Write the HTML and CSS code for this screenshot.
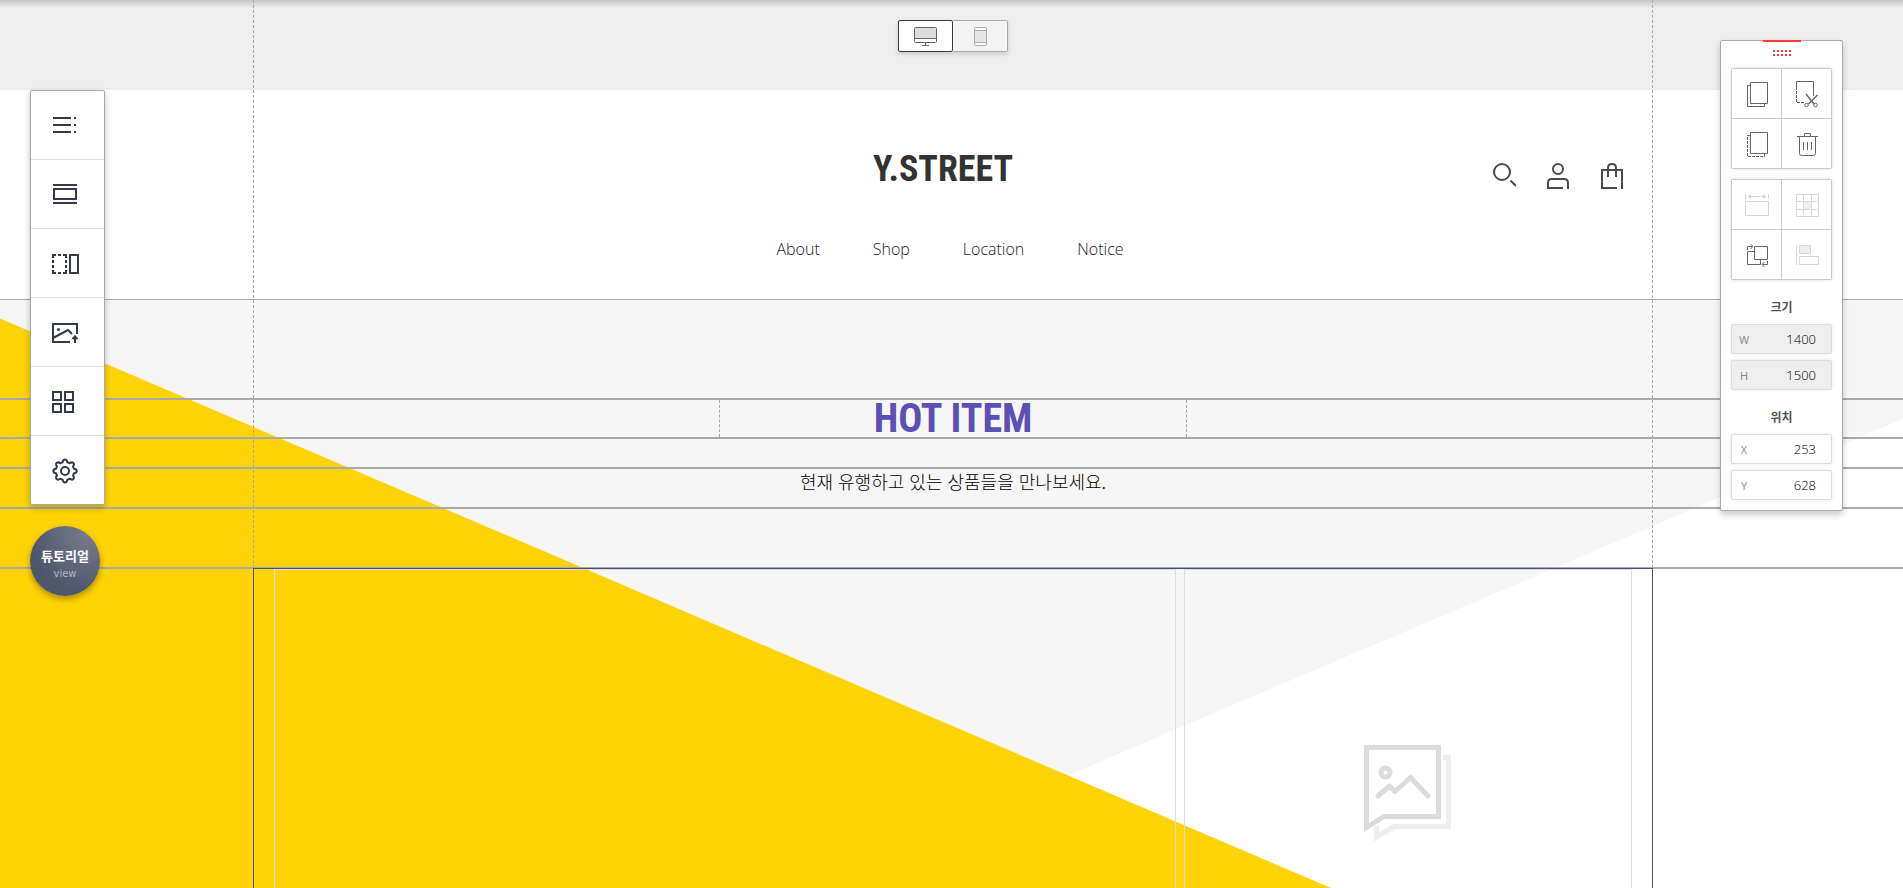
FILE: index.html
```html
<!DOCTYPE html>
<html lang="ko">
<head>
<meta charset="utf-8">
<meta name="viewport" content="width=device-width, initial-scale=1">
<title>Y.STREET</title>
<link rel="stylesheet" href="styles.css">
</head>
<body>
<div class="editor">
  <div class="topbar">
    <div class="device-switch">
      <button type="button" class="device device-active" aria-label="Desktop">
        <svg width="24" height="20" viewBox="0 0 24 20" fill="none" stroke="#666"><rect x=".5" y="1.500" width="22" height="15" rx="1" fill="#fff"/><path d="M1 2h21v10H1z" fill="#ddd" stroke="none"/><path d="M.5 12.500h22M11.500 17v2M8 19.500h7"/></svg>
      </button>
      <button type="button" class="device" aria-label="Mobile">
        <svg width="14" height="20" viewBox="0 0 14 20" fill="none" stroke="#aaa"><rect x="1.500" y="1.500" width="12" height="18" rx="1.500" fill="#fff"/><path d="M2 5h11v11H2z" fill="#e6e6e6" stroke="none"/><path d="M1.500 4.500h12M1.500 16.500h12"/></svg>
      </button>
    </div>
  </div>

  <div class="canvas">
    <header class="site-header">
      <div class="frame header-frame">
        <a class="logo" href="#">Y.STREET</a>
        <nav class="nav" aria-label="Main">
          <a href="#">About</a><a href="#">Shop</a><a href="#">Location</a><a href="#">Notice</a>
        </nav>
        <div class="tools">
          <a href="#" aria-label="Search"><svg width="26" height="28" viewBox="0 0 26 28" fill="none" stroke="#4a4a4a" stroke-width="2"><circle cx="12" cy="10" r="8"/><path d="M20.500 18.500l5.500 5.500"/></svg></a>
          <a href="#" aria-label="Account"><svg width="24" height="28" viewBox="0 0 24 28" fill="none" stroke="#4a4a4a" stroke-width="2"><circle cx="12" cy="7" r="5"/><path d="M17 26H2v-5q0-4 4-4h12q4 0 4 4v6"/></svg></a>
          <a href="#" aria-label="Cart"><svg width="24" height="28" viewBox="0 0 24 28" fill="none" stroke="#4a4a4a" stroke-width="2"><path d="M17 26H2V8h20v19M8 15V6q0-4 4-4t4 4v9"/></svg></a>
        </div>
      </div>
    </header>

    <main class="section">
      <svg class="backdrop" viewBox="0 0 1903 588" preserveAspectRatio="none" aria-hidden="true">
        <path d="M1903 119L1068 475.400 1331 588H1903z" fill="#fff"/>
        <path d="M0 18.500L1331 588H0z" fill="#ffd306"/>
      </svg>
      <div class="section-body">
        <div class="row row-spacer"></div>
        <div class="row row-lined"><div class="frame"><h1 class="headline">HOT ITEM</h1></div></div>
        <div class="row row-gap"></div>
        <div class="row row-lined"><div class="frame"><p class="lead">현재 유행하고 있는 상품들을 만나보세요.</p></div></div>
        <div class="row row-rest"></div>
        <div class="row row-gallery">
          <div class="frame gallery">
            <div class="slot slot-wide"></div>
            <div class="slot slot-narrow">
              <svg width="88" height="98" viewBox="0 0 88 98" fill="none" stroke-width="5"><path d="M79 12.500h5.500v69H30L12.500 92V81" stroke="#eee"/><path d="M2.500 2.500h72v69H20L2.500 82.500z" stroke="#dcdcdc"/><g stroke="#dcdcdc"><circle cx="21.500" cy="27.500" r="4.500"/><path d="M14 51l11.500-10 5.500 5.500 15.500-14L64 51" stroke-linecap="round" stroke-linejoin="round"/></g></svg>
            </div>
          </div>
        </div>
      </div>
    </main>
  </div>

  <div class="side">
    <div class="toolbox">
      <button type="button" aria-label="Menu"><svg width="28" height="24" viewBox="0 0 28 24" fill="none" stroke="#353a4a" stroke-width="2"><path d="M2 4h18M2 11h18M2 18h18M23 4h2M23 11h2M23 18h2"/></svg></button>
      <button type="button" aria-label="Section"><svg width="28" height="24" viewBox="0 0 28 24" fill="none" stroke="#353a4a" stroke-width="2"><path d="M2 2h24M2 20h24M3 6h22v10H3z"/></svg></button>
      <button type="button" aria-label="Columns"><svg width="28" height="24" viewBox="0 0 28 24" fill="none" stroke="#353a4a" stroke-width="2"><path d="M1 3h4M7 3h3M12 3h4M1 21h4M7 21h3M12 21h4M2 2v4M2 8v3M2 13v3M2 18v4M15 2v4M15 8v3M15 13v3M15 18v4M19 3h8v18h-8z"/></svg></button>
      <button type="button" aria-label="Image"><svg width="28" height="24" viewBox="0 0 28 24" fill="none" stroke="#353a4a" stroke-width="2"><path d="M19 21H2V3h24v10M2 17l15-8 4 4M24 22v-6M21.500 18L24 15.500l2.500 2.500"/><circle cx="7.500" cy="8.500" r="1.500" fill="#353a4a" stroke="none"/></svg></button>
      <button type="button" aria-label="Widgets"><svg width="28" height="24" viewBox="0 0 28 24" fill="none" stroke="#353a4a" stroke-width="2"><path d="M2 2h8v8H2zM14 2h8v8h-8zM2 14h8v8H2zM14 14h8v8h-8z"/></svg></button>
      <button type="button" aria-label="Settings"><svg width="28" height="26" viewBox="0 0 28 26" fill="none" stroke="#353a4a" stroke-width="2" stroke-linejoin="round"><path d="M14 1.500q2 0 2.300 2.800 1 .3 2 1Q21 3.600 22.400 5q1.300 1.400-.4 3.600.6 1 .9 2.100 2.800.3 2.800 2.300t-2.800 2.300q-.3 1.100-.9 2.100 1.700 2.200.4 3.600-1.400 1.400-4.100-.3-1 .7-2 1-.3 2.800-2.300 2.800t-2.300-2.800q-1-.3-2-1Q7 22.400 5.600 21q-1.300-1.400.4-3.600-.6-1-.9-2.100Q2.300 15 2.300 13t2.800-2.300q.3-1.100.9-2.100Q4.300 6.400 5.600 5 7 3.600 9.700 5.300q1-.7 2-1Q12 1.500 14 1.500z"/><circle cx="14" cy="13" r="4"/></svg></button>
    </div>
    <button type="button" class="tutorial"><strong>튜토리얼</strong><span>view</span></button>
  </div>

  <aside class="inspector">
    <svg class="grip" width="38" height="16" viewBox="0 0 38 16" fill="none" stroke="#fb3b30" stroke-width="2" aria-hidden="true"><path d="M0 1h38"/><path d="M10 11h18M10 15h18" stroke-dasharray="2 2"/></svg>
    <div class="actions">
      <button type="button" aria-label="Copy"><svg width="25" height="29" viewBox="0 0 25 29" fill="none" stroke="#666"><path d="M6.500 3.500h17v21h-17zM6 6.500H3.500v21h17V25"/></svg></button>
      <button type="button" aria-label="Cut"><svg width="25" height="29" viewBox="0 0 25 29" fill="none" stroke="#666"><path d="M2.500 8V2.500h17V17"/><path d="M2.500 8v15.500H11" stroke-dasharray="3 1"/><path d="M12 15l8 10M23.500 16l-9 9" stroke-width="1.500"/><circle cx="12.500" cy="26" r="1.800"/><circle cx="21.500" cy="26" r="1.800"/></svg></button>
      <button type="button" aria-label="Duplicate"><svg width="25" height="29" viewBox="0 0 25 29" fill="none" stroke="#666"><path d="M6.500 3.500h17v21h-17z"/><path d="M6 6.500H3.500v21h17V25" stroke-dasharray="3 1"/></svg></button>
      <button type="button" aria-label="Delete"><svg width="25" height="29" viewBox="0 0 25 29" fill="none" stroke="#666"><path d="M3 7.500h21M10.500 7V4.500h6V7M5.500 8v16.500q0 2 2 2h12q2 0 2-2V8M9.500 13v8M13.500 13v8M17.500 13v8"/></svg></button>
    </div>
    <div class="actions">
      <button type="button" aria-label="Full width"><svg width="25" height="29" viewBox="0 0 25 29" fill="none" stroke="#d6d6d6"><path d="M1.500 11.500h23v14h-23zM1.500 4v5M24.500 4v5M4 6.500h18"/><path d="M3.500 6.500L7 4v5zM22.500 6.500L19 4v5z" fill="#d6d6d6" stroke="none"/></svg></button>
      <button type="button" aria-label="Grid"><svg width="25" height="29" viewBox="0 0 25 29" fill="none" stroke="#d6d6d6"><path d="M9 11h9v8H9z" fill="#eee" stroke="none"/><path d="M2.500 4.500h22v22h-22z"/><path d="M9.500 5v21M17.500 5v21M3 11.500h21M3 19.500h21" stroke-dasharray="6 1"/></svg></button>
      <button type="button" aria-label="Order"><svg width="25" height="29" viewBox="0 0 25 29" fill="none" stroke="#666"><path d="M10.500 6.500h13v13h-13zM10 11.500H3.500v13h13V20M3.500 10V6.500h5M6.500 4L9 6.500 6.500 9M23.500 21v3.500h-5M20.500 22L18 24.500l2.500 2.500"/></svg></button>
      <button type="button" aria-label="Align"><svg width="25" height="29" viewBox="0 0 25 29" fill="none" stroke="#d6d6d6"><path d="M2.500 5v20M5.500 16.500h19v8h-19z"/><path d="M5.500 5.500h11v8h-11z" fill="#eee"/></svg></button>
    </div>
    <fieldset class="fields">
      <legend>크기</legend>
      <label class="field field-off"><span>W</span><input type="text" value="1400" readonly></label>
      <label class="field field-off"><span>H</span><input type="text" value="1500" readonly></label>
    </fieldset>
    <fieldset class="fields">
      <legend>위치</legend>
      <label class="field"><span>X</span><input type="text" value="253"></label>
      <label class="field"><span>Y</span><input type="text" value="628"></label>
    </fieldset>
  </aside>
</div>
</body>
</html>
```

FILE: styles.css
```css
*, *::before { box-sizing: border-box; }

body {
  margin: 0;
  background: #fff;
  color: #333;
  font-family: "Open Sans", "Noto Sans CJK KR", sans-serif;
}

a { color: inherit; text-decoration: none; }

button {
  margin: 0;
  padding: 0;
  border: 0;
  background: none;
  font: inherit;
  color: inherit;
  cursor: pointer;
}

svg { display: block; }

.editor {
  position: relative;
  display: flex;
  flex-direction: column;
  min-height: 100vh;
  overflow: hidden;
}

/* Top strip with the device switch */
.topbar {
  display: flex;
  justify-content: center;
  height: 90px;
  padding: 20px 0 0 3px;
  background: #eee linear-gradient(#c4c4c4, #eee) no-repeat 0 0 / 100% 8px;
}

.device-switch {
  display: flex;
  height: 32px;
  box-shadow: 0 2px 4px rgba(0, 0, 0, 0.15);
}

.device {
  display: flex;
  align-items: center;
  justify-content: center;
  width: 55px;
  border: 1px solid #aaa;
  border-left: 0;
  border-radius: 0 2px 2px 0;
  background: #f3f3f3;
}

.device-active {
  border: 1px solid #353a4a;
  border-radius: 2px;
  background: #fff;
}

/* Page canvas */
.canvas {
  flex: 1;
  display: flex;
  flex-direction: column;
}

.frame {
  width: 1400px;
  max-width: 100%;
  margin: 0 auto;
}

.site-header {
  height: 210px;
  padding-left: 3px;
  border-bottom: 1px solid #a9a9a9;
}

.header-frame {
  position: relative;
  display: flex;
  flex-direction: column;
  align-items: center;
  height: 100%;
  padding-top: 55px;
}

.logo {
  padding-right: 20px;
  font: bold 36px/48px "Liberation Sans Narrow", "Roboto Condensed", "Open Sans", sans-serif;
}

.nav {
  display: flex;
  gap: 53px;
  margin-top: 44px;
  padding-right: 6px;
  color: #222;
  font-size: 16px;
  font-weight: 300;
  line-height: 24px;
}

.tools {
  position: absolute;
  top: 72px;
  right: 29px;
  display: flex;
  gap: 30px;
}

.section {
  position: relative;
  flex: 1;
  display: flex;
  background: #f6f6f6;
}

.backdrop {
  position: absolute;
  inset: 0;
  width: 100%;
  height: 100%;
}

.section-body {
  position: relative;
  flex: 1;
  display: flex;
  flex-direction: column;
}

.row { padding-left: 3px; }
.row-spacer { height: 98px; }
.row-gap { height: 28px; }
.row-rest { height: 58px; }

.row-lined {
  border-top: 2px solid #a9a9a9;
  border-bottom: 2px solid #a9a9a9;
}

.headline {
  width: 468px;
  margin: 0 auto;
  border: 1px dashed #a9a9a9;
  border-width: 0 1px;
  color: #5c50b4;
  font: bold 40px/37px "Liberation Sans Narrow", "Roboto Condensed", "Open Sans", sans-serif;
  text-align: center;
}

.lead {
  margin: 0;
  padding-bottom: 14px;
  color: #000;
  font: 300 18px/24px "Noto Sans CJK KR", sans-serif;
  text-align: center;
}

.row-gallery {
  flex: 1;
  display: flex;
  border-top: 1px solid #a9a9a9;
  box-shadow: inset 0 1px #a9a9a9;
}

.gallery {
  display: flex;
  gap: 8px;
  padding: 0 20px;
  border: 1px solid #445082;
  border-bottom: 0;
}

.slot {
  border: 1px solid #ddd;
  border-bottom: 0;
}

.slot-wide { flex: 904; }

.slot-narrow {
  flex: 448;
  display: flex;
  justify-content: center;
  padding-top: 175px;
}

/* Dotted page guides */
.editor::before {
  content: "";
  position: absolute;
  z-index: 1;
  top: 0;
  left: calc(50% + 1px);
  width: 1400px;
  height: 568px;
  margin-left: -700px;
  border: 1px dashed #a9a9a9;
  border-width: 0 1px;
  pointer-events: none;
}

/* Left floating tools */
.side {
  position: absolute;
  z-index: 2;
  top: 90px;
  left: 30px;
  display: flex;
  flex-direction: column;
  gap: 21px;
}

.toolbox {
  display: flex;
  flex-direction: column;
  width: 75px;
  border: 1px solid #a9a9a9;
  border-radius: 2px;
  background: #fff;
  box-shadow: 0 3px 6px rgba(0, 0, 0, 0.25);
}

.toolbox button {
  display: flex;
  align-items: center;
  justify-content: center;
  height: 69px;
  padding: 2px 5px 0 0;
  border-bottom: 1px solid #ddd;
}

.toolbox button:last-child {
  height: 68px;
  border-bottom: 0;
}

.tutorial {
  display: flex;
  flex-direction: column;
  align-items: center;
  width: 70px;
  height: 70px;
  padding-top: 21px;
  border-radius: 50%;
  background: radial-gradient(circle at 85% 10%, #7a7e8c, #4e566e 70%);
  box-shadow: 0 3px 6px rgba(0, 0, 0, 0.35);
  color: #fff;
  font-family: "Noto Sans CJK KR", sans-serif;
  font-size: 13px;
  line-height: 18px;
}

.tutorial span {
  color: #b4b7c2;
  font-family: "DejaVu Sans", sans-serif;
  font-size: 10px;
}

/* Right floating inspector */
.inspector {
  position: absolute;
  z-index: 2;
  top: 40px;
  right: 60px;
  width: 123px;
  padding: 0 10px 10px;
  border: 1px solid #a9a9a9;
  border-radius: 2px;
  background: #fff;
  box-shadow: 0 4px 6px rgba(0, 0, 0, 0.2);
}

.grip { margin: -1px auto 12px; }

.actions {
  display: grid;
  grid-template-columns: 1fr 1fr;
  gap: 1px;
  margin-bottom: 10px;
  border: 1px solid #ccc;
  border-radius: 2px;
  background: #ccc;
  box-shadow: 0 0 4px rgba(0, 0, 0, 0.12);
}

.actions button {
  display: flex;
  align-items: center;
  justify-content: center;
  height: 49px;
  background: #fff;
}

.fields {
  display: flex;
  flex-direction: column;
  gap: 6px;
  min-width: 0;
  margin: 0;
  padding: 0;
  border: 0;
}

.fields legend {
  width: 100%;
  padding: 8px 0;
  color: #555;
  font: bold 12px/18px "Noto Sans CJK KR", sans-serif;
  text-align: center;
}

.fields + .fields { margin-top: 10px; }

.field {
  display: flex;
  align-items: center;
  height: 30px;
  padding: 0 15px 0 7px;
  border: 1px solid #ddd;
  border-radius: 2px;
  background: #fff;
  box-shadow: 0 0 4px rgba(0, 0, 0, 0.08);
}

.field-off { background: #eee; }

.field span {
  width: 10px;
  color: #888;
  font-size: 11px;
  text-align: center;
}

.field input {
  flex: 1;
  min-width: 0;
  padding: 0;
  border: 0;
  outline: 0;
  background: none;
  color: #000;
  font: 300 13px/18px "Open Sans", sans-serif;
  text-align: right;
}
```
